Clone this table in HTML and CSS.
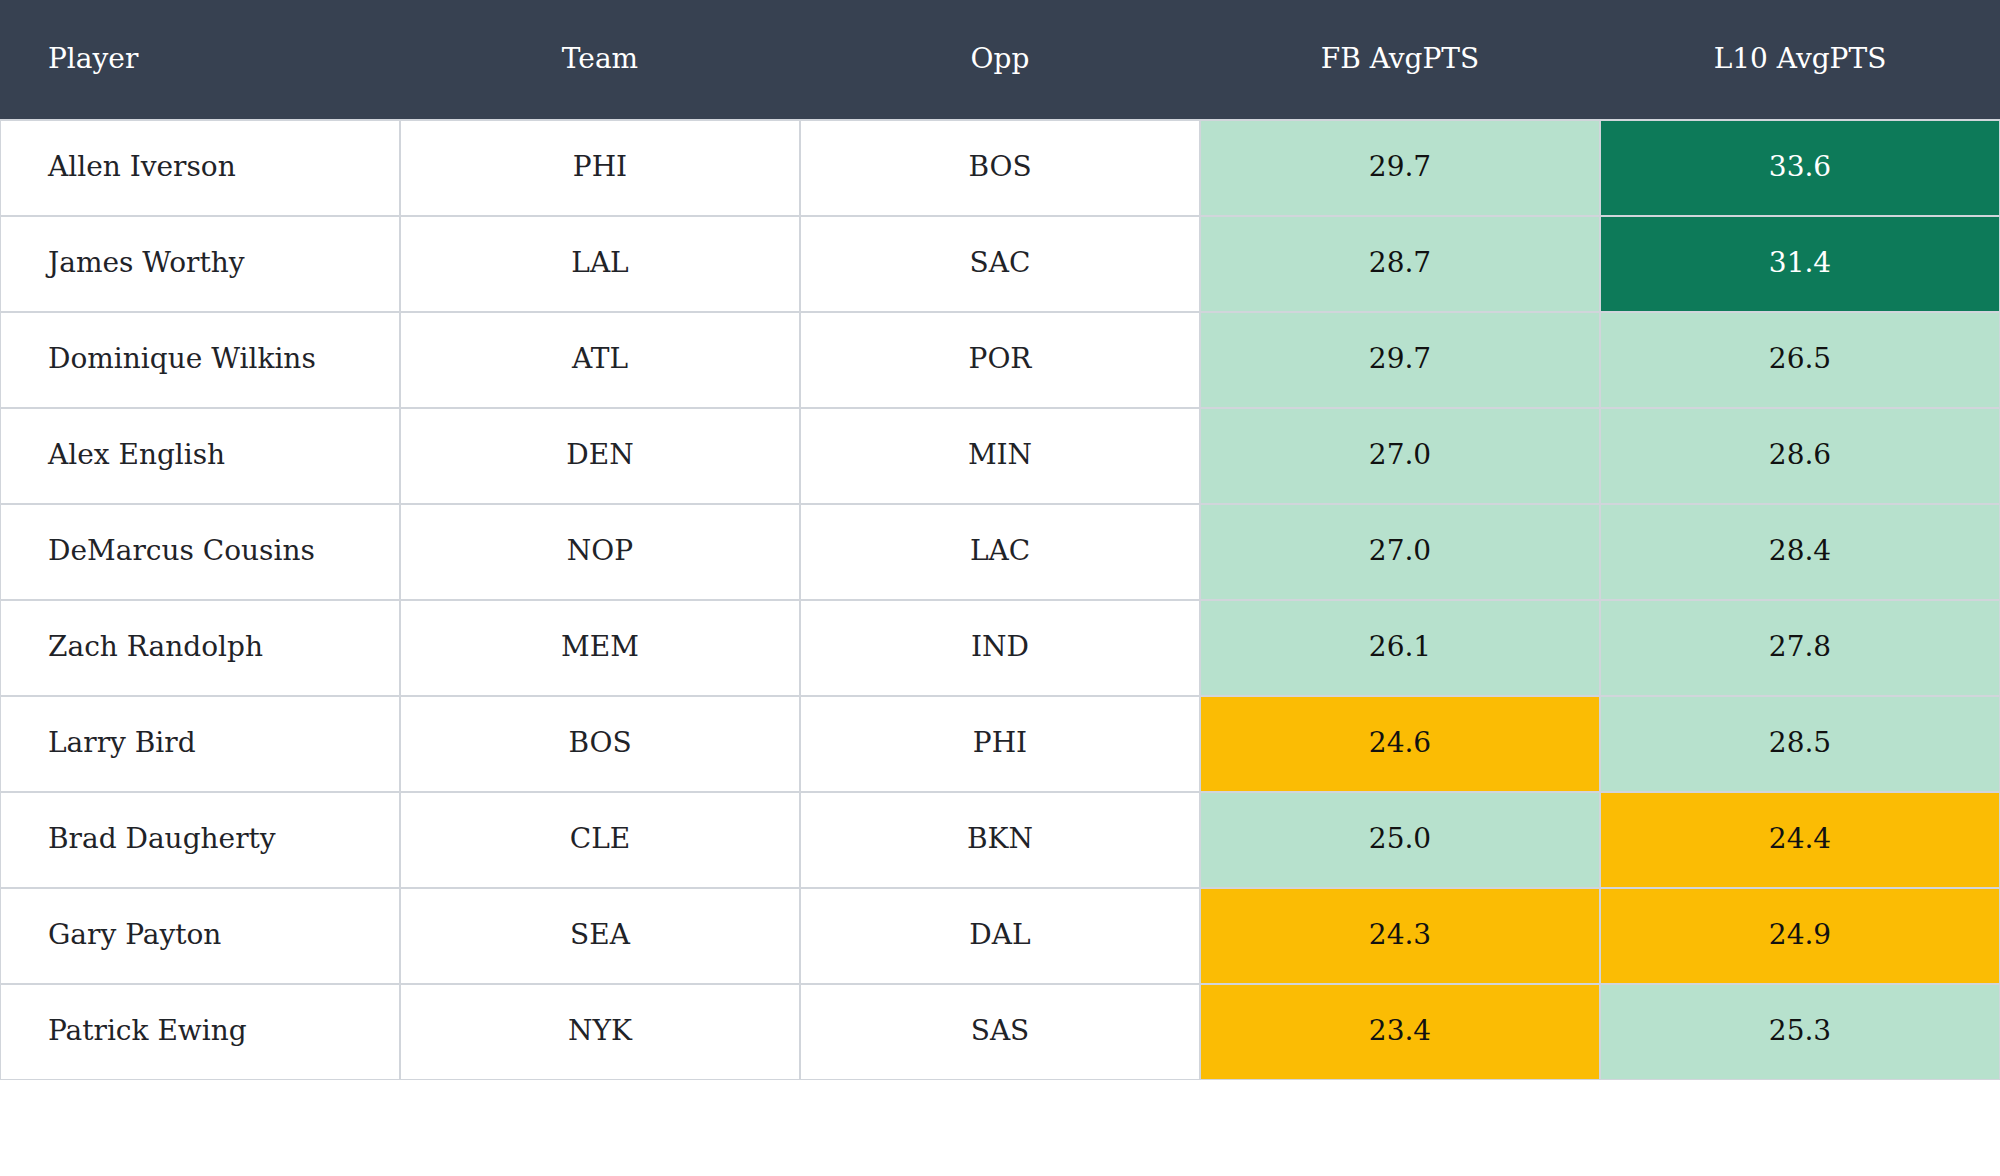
FILE: index.html
```html
<!DOCTYPE html>
<html lang="en">
<head>
<meta charset="utf-8">
<title>Player Stats</title>
<link rel="stylesheet" href="styles.css">
</head>
<body>
<table class="stats">
  <thead>
    <tr>
      <th class="col-player">Player</th>
      <th>Team</th>
      <th>Opp</th>
      <th>FB AvgPTS</th>
      <th>L10 AvgPTS</th>
    </tr>
  </thead>
  <tbody>
    <tr><td class="col-player">Allen Iverson</td><td>PHI</td><td>BOS</td><td class="good">29.7</td><td class="great">33.6</td></tr>
    <tr><td class="col-player">James Worthy</td><td>LAL</td><td>SAC</td><td class="good">28.7</td><td class="great">31.4</td></tr>
    <tr><td class="col-player">Dominique Wilkins</td><td>ATL</td><td>POR</td><td class="good">29.7</td><td class="good">26.5</td></tr>
    <tr><td class="col-player">Alex English</td><td>DEN</td><td>MIN</td><td class="good">27.0</td><td class="good">28.6</td></tr>
    <tr><td class="col-player">DeMarcus Cousins</td><td>NOP</td><td>LAC</td><td class="good">27.0</td><td class="good">28.4</td></tr>
    <tr><td class="col-player">Zach Randolph</td><td>MEM</td><td>IND</td><td class="good">26.1</td><td class="good">27.8</td></tr>
    <tr><td class="col-player">Larry Bird</td><td>BOS</td><td>PHI</td><td class="warn">24.6</td><td class="good">28.5</td></tr>
    <tr><td class="col-player">Brad Daugherty</td><td>CLE</td><td>BKN</td><td class="good">25.0</td><td class="warn">24.4</td></tr>
    <tr><td class="col-player">Gary Payton</td><td>SEA</td><td>DAL</td><td class="warn">24.3</td><td class="warn">24.9</td></tr>
    <tr><td class="col-player">Patrick Ewing</td><td>NYK</td><td>SAS</td><td class="warn">23.4</td><td class="good">25.3</td></tr>
  </tbody>
</table>
</body>
</html>
```
FILE: styles.css
```css
html, body {
  margin: 0;
  padding: 0;
  background: #ffffff;
}

.stats {
  width: 100%;
  border-collapse: separate;
  border-spacing: 0;
  table-layout: fixed;
  font-family: "DejaVu Serif", "Liberation Serif", serif;
  font-size: 28px;
  color: #1f2328;
}

.stats th {
  height: 120px;
  padding: 0 0 3px 0;
  background: #374151;
  color: #ffffff;
  font-weight: normal;
  text-align: center;
  border-bottom: 1px solid #d1d5db;
  box-sizing: border-box;
}

.stats td {
  height: 96px;
  padding: 0 0 3px 0;
  text-align: center;
  border: 1px solid #d1d5db;
  box-sizing: border-box;
}

.stats th.col-player {
  text-align: left;
  padding-left: 48px;
}

.stats td.col-player {
  text-align: left;
  padding-left: 47px;
}

.stats td.good {
  background: #b7e1cd;
  color: #111111;
}

.stats td.great {
  background: #0d7a59;
  color: #ffffff;
}

.stats td.warn {
  background: #fbbc04;
  color: #111111;
}
```
